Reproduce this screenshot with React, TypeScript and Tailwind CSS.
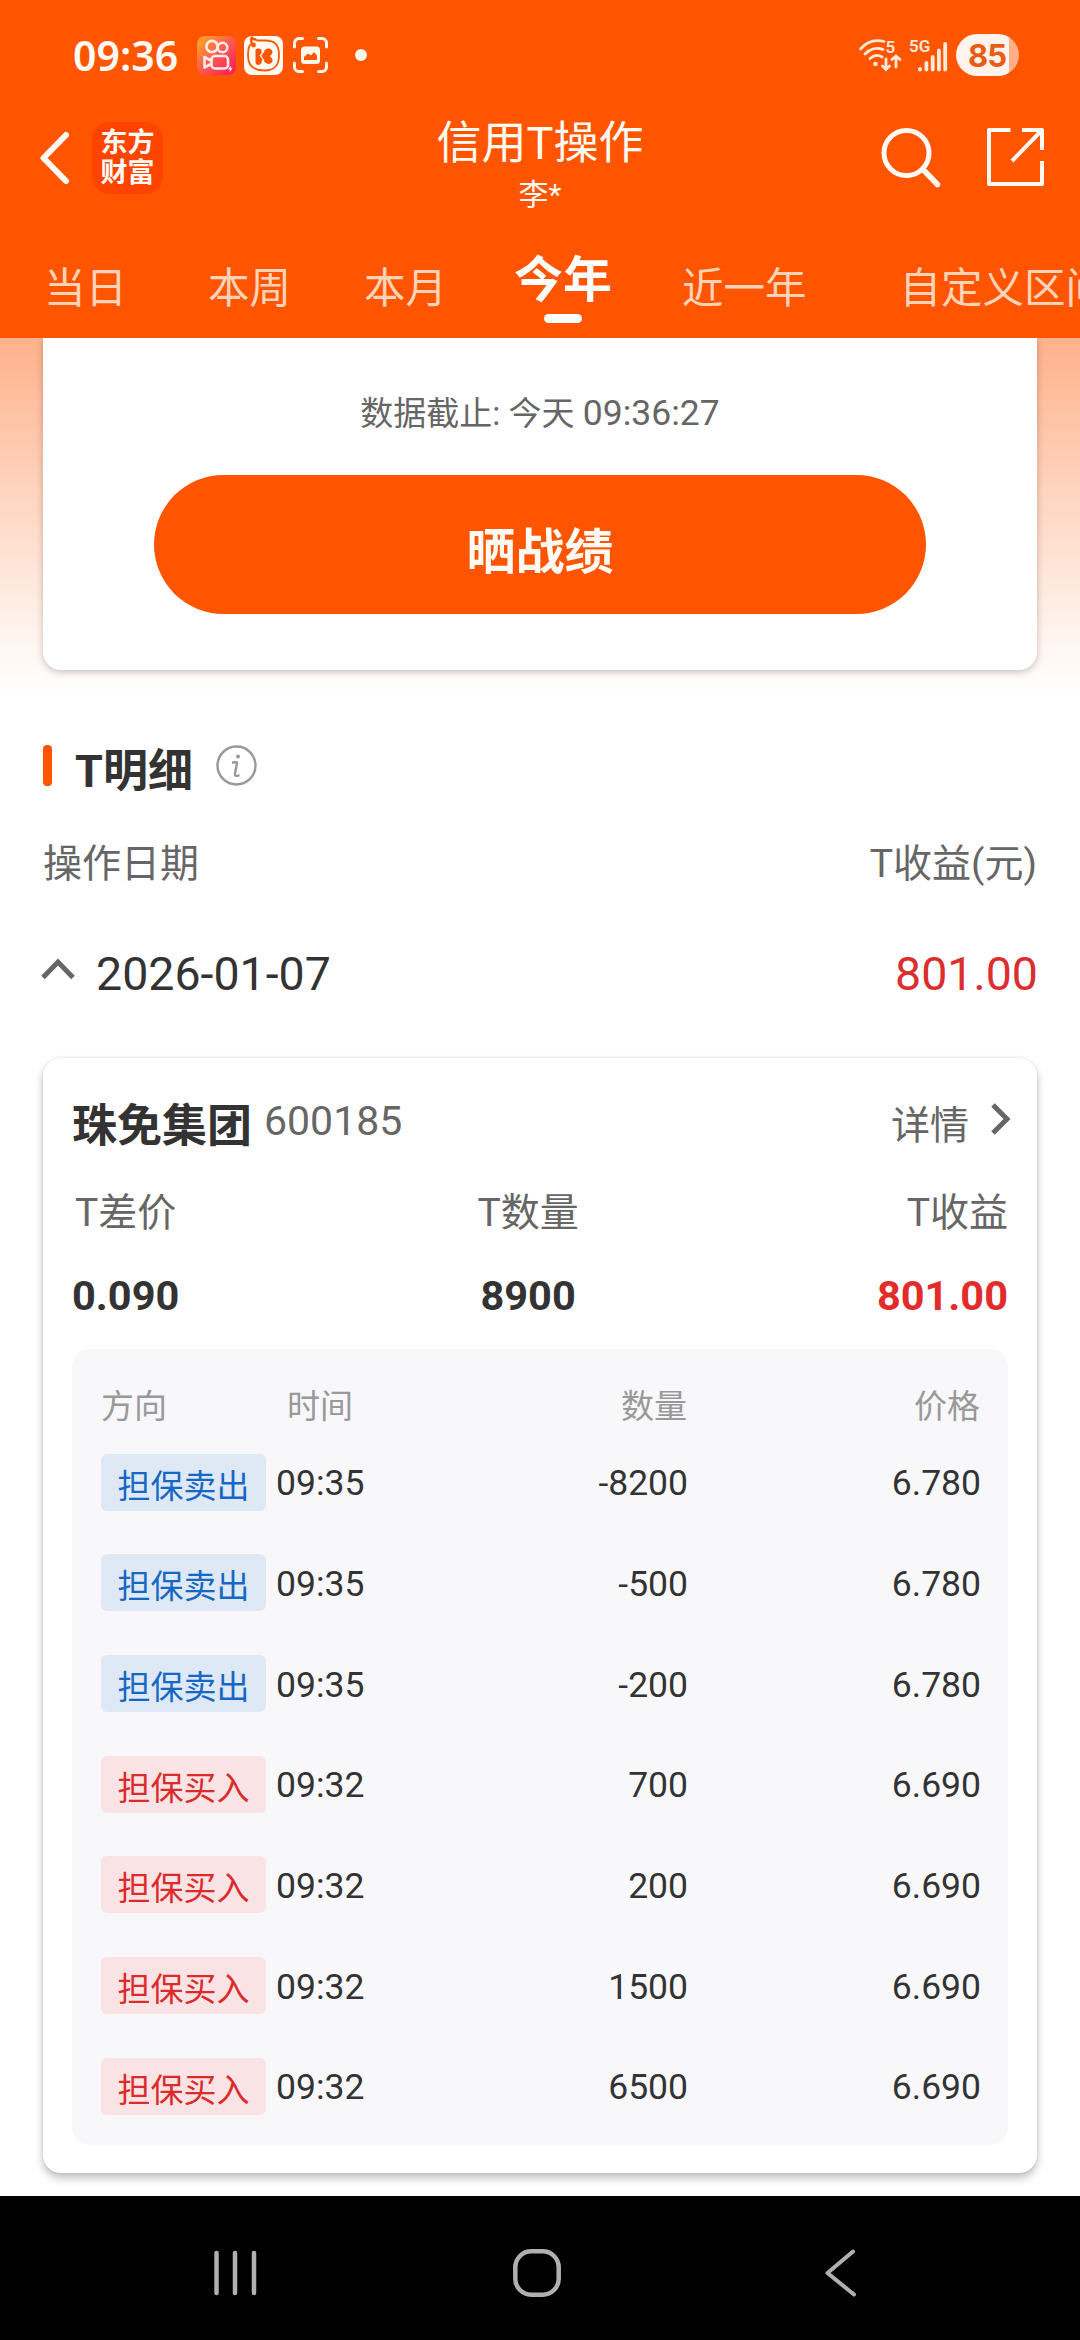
const tabs = [
  { label: '当日', gap: 'ml-[44px]' },
  { label: '本周', gap: 'ml-[81px]' },
  { label: '本月', gap: 'ml-[73px]' },
  { label: '今年', gap: 'ml-[67px]', active: true },
  { label: '近一年', gap: 'ml-[70px]' },
  { label: '自定义区间', gap: 'ml-[93px]' },
]

const trades = [
  { side: 'sell', time: '09:35', amount: '-8200', price: '6.780' },
  { side: 'sell', time: '09:35', amount: '-500', price: '6.780' },
  { side: 'sell', time: '09:35', amount: '-200', price: '6.780' },
  { side: 'buy', time: '09:32', amount: '700', price: '6.690' },
  { side: 'buy', time: '09:32', amount: '200', price: '6.690' },
  { side: 'buy', time: '09:32', amount: '1500', price: '6.690' },
  { side: 'buy', time: '09:32', amount: '6500', price: '6.690' },
]

function StatusBar() {
  return (
    <div className="flex h-[110px] items-center pl-[73px] pr-[61px]">
      <span className="w-[124px] font-['Noto_Sans',sans-serif] text-[41px] font-semibold leading-none">09:36</span>
      <svg className="h-[39px] w-[39px]" viewBox="0 0 39 39" fill="none">
        <defs>
          <linearGradient id="kwai" x1="0" y1="0" x2="1" y2="1">
            <stop offset="0" stopColor="#ffae1c" />
            <stop offset="0.5" stopColor="#ff5a50" />
            <stop offset="1" stopColor="#f5165c" />
          </linearGradient>
        </defs>
        <rect width="39" height="39" rx="8" fill="url(#kwai)" />
        <g stroke="#ffe9ec" strokeWidth="2.6" strokeLinejoin="round">
          <circle cx="15" cy="10.5" r="5.6" />
          <circle cx="25.5" cy="11.5" r="4.8" />
          <rect x="14.5" y="20" width="16.5" height="12.5" rx="3.6" />
          <path d="M14 24.5 7.5 21v10.5l6.5-3.5" />
        </g>
        <path d="M34 29.5l-3 4h2l-.5 3 3-4.5h-2z" fill="#fff" />
      </svg>
      <svg className="ml-[8px] h-[39px] w-[39px]" viewBox="0 0 39 39" fill="none">
        <rect width="39" height="39" rx="8" fill="#fffaf2" />
        <path d="M13 4.500h8c10 0 14 4 14 14.500s-4 15.500-14.500 15.500S4 30 4 19.500c0-5 .5-8 2-10.500" stroke="#ff5500" strokeWidth="1.8" strokeLinecap="round" />
        <path d="M8 1.500c-2 2 0 4-.5 6.500M8 2.500l3.500 1" stroke="#ff5500" strokeWidth="2.4" strokeLinecap="round" />
        <circle cx="9.5" cy="9" r="2.4" fill="#ff5500" />
        <path d="M11.500 14c1-2 5-2 6 0v3l4-3.500c3.500-2.500 8.500.5 6.500 4.500L26 20l2 2.500c2 4-2.500 7-6 4.500l-4-3c-.5 1.500 0 3.500-2 4.500s-4.500 0-4.500-2.500z" fill="#ff5500" />
        <path d="M20 15l-3.500 4.500L20 25" stroke="#fffaf2" strokeWidth="1.3" />
      </svg>
      <svg className="ml-[10px] h-[36px] w-[35px]" viewBox="0 0 35 36" fill="none">
        <path d="M1.500 10V6a4.500 4.500 0 0 1 4.500-4.500h3.500M25.500 1.500H29A4.500 4.500 0 0 1 33.500 6v4M33.500 26v4a4.500 4.500 0 0 1-4.500 4.500h-3.500M9.500 34.500H6A4.500 4.500 0 0 1 1.500 30v-4" stroke="#fff6ec" strokeWidth="3" strokeLinecap="round" />
        <rect x="8" y="9.5" width="19" height="17.5" rx="3.5" fill="#fff6ec" />
        <path d="M11 23v-3l4-3.500 3 2 3-3.500 3 3.500V23z" fill="#ff5500" />
      </svg>
      <span className="ml-[27px] h-[12px] w-[12px] rounded-full bg-[#fff6ec]" />

      <svg className="ml-auto h-[34px] w-[42px] overflow-visible" viewBox="0 0 42 34" fill="none">
        <g stroke="#ffe9d8" strokeWidth="2.8" strokeLinecap="round">
          <path d="M1.500 11C8 3.500 17 1.500 25 3.500" />
          <path d="M6 16c5-5 12-7 18-4.500" />
          <path d="M11 20.500c4-3.500 8-4 12-1.500" />
          <path d="M27 21v10M23.500 28l3.500 3.500 3.500-3.500M37 29V18.500M33 21.500l4-3.500 4 3.500" />
        </g>
        <circle cx="16.5" cy="26" r="2.3" fill="#ffe9d8" />
        <text x="26.5" y="15" fill="#ffe9d8" fontFamily="Roboto, sans-serif" fontSize="17" fontWeight="600">5</text>
      </svg>
      <svg className="ml-[8px] h-[34px] w-[39px] overflow-visible" viewBox="0 0 39 34" fill="#ffe9d8">
        <text x="0" y="14" fontFamily="Roboto, sans-serif" fontSize="17" fontWeight="600">5G</text>
        <rect x="9" y="29" width="4" height="4.5" rx="2" />
        <rect x="15.5" y="23" width="3.8" height="10.5" rx="1.9" />
        <rect x="21.8" y="17" width="3.8" height="16.5" rx="1.9" />
        <rect x="28" y="10.5" width="3.8" height="23" rx="1.9" />
        <rect x="34.3" y="4" width="3.8" height="29.5" rx="1.9" />
      </svg>
      <div className="ml-[8px] flex h-[42px] w-[63px] items-center justify-center rounded-full bg-[linear-gradient(90deg,#fff3ec_53px,#ffb088_53px)] pr-[1px] font-['Inter',sans-serif] text-[31px] font-bold leading-none tracking-[-1px] text-[#ea5b14]">
        85
      </div>
    </div>
  )
}

function Header() {
  return (
    <header className="h-[338px] overflow-hidden bg-[#ff5500] text-[#fffaf3]">
      <StatusBar />
      <div className="flex h-[108px] items-start justify-between">
        <div className="flex h-[96px] w-[340px] items-center pl-[40px]">
          <svg className="h-[54px] w-[30px]" viewBox="0 0 30 54" fill="none" stroke="#fffaf3" strokeWidth="6" strokeLinecap="round" strokeLinejoin="round">
            <path d="M26 4 3.500 27 26 50" />
          </svg>
          <div className="ml-[22px] flex h-[72px] w-[71px] flex-col items-center justify-center rounded-[17px] bg-[#ff4400] text-[27px] font-bold leading-[30px]">
            <span>东方</span>
            <span>财富</span>
          </div>
        </div>
        <div className="flex flex-col items-center whitespace-nowrap">
          <h1 className="text-[45px] leading-[67px]">信用T操作</h1>
          <p className="text-[30px] leading-[36px]">李*</p>
        </div>
        <div className="flex h-[96px] w-[340px] items-center justify-end pr-[36px]">
          <svg className="h-[62px] w-[60px]" viewBox="0 0 60 62" fill="none" stroke="#fffaf3" strokeLinecap="round">
            <circle cx="25.5" cy="26" r="22.5" strokeWidth="5" />
            <path d="M42 42.500 56.500 57.500" strokeWidth="5.5" />
          </svg>
          <svg className="mb-[2px] ml-[46px] h-[58px] w-[57px]" viewBox="0 0 57 58" fill="none" stroke="#fffaf3" strokeWidth="4" strokeLinejoin="round">
            <path d="M23.500 2H2v54h53V33" />
            <path d="M35 2h20v20M54 3 25 33" />
          </svg>
        </div>
      </div>
      <nav className="flex h-[120px] items-start whitespace-nowrap">
        {tabs.map((tab) =>
          tab.active ? (
            <div key={tab.label} className={`${tab.gap} flex shrink-0 flex-col items-center text-white`}>
              <span className="h-[96px] pt-[14px] text-[49px] font-bold leading-[98px]">{tab.label}</span>
              <span className="h-[9px] w-[38px] rounded-full bg-white" />
            </div>
          ) : (
            <span key={tab.label} className={`${tab.gap} shrink-0 text-[41.5px] leading-[141px] text-[#ffd3b8]`}>
              {tab.label}
            </span>
          ),
        )}
      </nav>
    </header>
  )
}

function SummaryCard() {
  return (
    <div className="mx-[43px] flex h-[332px] flex-col items-center rounded-b-[18px] bg-white shadow-[0_2px_7px_rgba(60,40,30,0.28)]">
      <p className="h-[137px] pt-[12px] text-[33px] leading-[127px] text-[#666]">
        数据截止: 今天 <span className="text-[35.5px]">09:36:27</span>
      </p>
      <button className="h-[139px] w-[772px] rounded-full bg-[#ff5500] pt-[17px] text-[49px] font-bold text-[#fffaf3]">
        晒战绩
      </button>
    </div>
  )
}

function SectionHead() {
  return (
    <div className="px-[43px]">
      <div className="mt-[75px] flex h-[41px] items-start">
        <span className="h-[41px] w-[9px] rounded-[4px] bg-[#ff5500]" />
        <h2 className="ml-[23px] text-[45px] font-bold leading-[53px] text-[#333]">T明细</h2>
        <svg className="ml-[23px] h-[41px] w-[41px]" viewBox="0 0 41 41" fill="none">
          <circle cx="20.5" cy="20.5" r="19" stroke="#999" strokeWidth="2.5" />
          <circle cx="22" cy="11.5" r="2" fill="#999" />
          <path d="M16 17.500c3 0 5-.8 5 0 0 2-2 9.500-2 12s3 .8 4.500.8" stroke="#999" strokeWidth="2.4" />
        </svg>
      </div>
      <div className="mt-[53px] flex h-[50px] items-center justify-between text-[39px] text-[#666]">
        <span>操作日期</span>
        <span>T收益(元)</span>
      </div>
      <div className="mt-[55px] flex h-[60px] items-center text-[46.5px] leading-[60px] text-[#333]">
        <svg className="-ml-[2px] mb-[10px] h-[22px] w-[34px]" viewBox="0 0 34 22" fill="none" stroke="#666" strokeWidth="5">
          <path d="M2 19.500 17 4l15 15.500" />
        </svg>
        <span className="ml-[21px]">2026-01-07</span>
        <span className="-mr-[1px] ml-auto text-[#dc2e2e]">801.00</span>
      </div>
    </div>
  )
}

function StockCard() {
  return (
    <div className="mx-[43px] mt-[54px] h-[1115px] rounded-[18px] bg-white px-[29px] pt-[45px] shadow-[0_5px_8px_rgba(0,0,0,0.25),0_0_3px_rgba(0,0,0,0.1)]">
      <div className="flex h-[46px] items-start">
        <span className="text-[45px] font-bold leading-[48px] text-[#333]">珠免集团</span>
        <span className="ml-[12px] text-[41px] leading-[37px] text-[#666]">600185</span>
        <span className="ml-auto text-[39px] leading-[46px] text-[#666]">详情</span>
        <svg className="-mr-[3px] ml-[21px] h-[32px] w-[21px]" viewBox="0 0 21 32" fill="none" stroke="#666" strokeWidth="5">
          <path d="M3 2l14 14L3 30" />
        </svg>
      </div>
      <div className="mt-[44px] flex justify-between text-[39px] text-[#666]">
        <div className="flex flex-col">
          <span className="pl-[3px] leading-[41px]">T差价</span>
          <b className="mt-[42px] text-[41.5px] leading-[40px] text-[#333]">0.090</b>
        </div>
        <div className="flex flex-col items-center">
          <span className="leading-[41px]">T数量</span>
          <b className="mt-[42px] text-[41.5px] leading-[40px] text-[#333]">8900</b>
        </div>
        <div className="flex flex-col items-end">
          <span className="leading-[41px]">T收益</span>
          <b className="mt-[42px] text-[41.5px] leading-[40px] text-[#e22b2b]">801.00</b>
        </div>
      </div>
      <div className="mt-[33px] h-[796px] rounded-[18px] bg-[#f8f8fb] pl-[29px] pt-[38px]">
        <div className="grid h-[40px] grid-cols-[186px_102px_299px_293px] text-[33px] leading-[40px] text-[#999]">
          <span>方向</span>
          <span>时间</span>
          <span className="pr-[1px] text-right">数量</span>
          <span className="pr-[1px] text-right">价格</span>
        </div>
        <div className="mt-[5px] text-[35.5px] text-[#333]">
          {trades.map((t, i) => (
            <div key={i} className="grid h-[100.67px] grid-cols-[175px_113px_299px_293px] items-center leading-[57px]">
              <span
                className={
                  t.side === 'sell'
                    ? 'h-[57px] w-[165px] rounded-[6px] bg-[#dfe9f6] text-center text-[33px] leading-[66px] text-[#1668c4]'
                    : 'h-[57px] w-[165px] rounded-[6px] bg-[#f9e3e4] text-center text-[33px] leading-[66px] text-[#dc2b2b]'
                }
              >
                {t.side === 'sell' ? '担保卖出' : '担保买入'}
              </span>
              <span className="pt-[3px]">{t.time}</span>
              <span className="pt-[3px] text-right">{t.amount}</span>
              <span className="pt-[3px] text-right">{t.price}</span>
            </div>
          ))}
        </div>
      </div>
    </div>
  )
}

function NavBar() {
  return (
    <footer className="flex h-[144px] items-center bg-black pt-[10px]">
      <svg className="ml-[213px] h-[48px] w-[44px]" viewBox="0 0 44 48" stroke="#b0b0b0" strokeWidth="4.5" strokeLinecap="round">
        <path d="M3.500 4v40M22 4v40M41 4v40" />
      </svg>
      <svg className="ml-[256px] h-[48px] w-[48px]" viewBox="0 0 48 48" fill="none" stroke="#b0b0b0" strokeWidth="4.5">
        <rect x="2.3" y="2.3" width="43.4" height="43.4" rx="16" />
      </svg>
      <svg className="ml-[264px] h-[48px] w-[31px]" viewBox="0 0 31 48" fill="none" stroke="#b0b0b0" strokeWidth="4" strokeLinecap="round" strokeLinejoin="round">
        <path d="M28 2.500 2.500 24 29 45.500" />
      </svg>
    </footer>
  )
}

export default function App() {
  return (
    <div className="flex h-[2340px] w-[1080px] flex-col overflow-hidden bg-white font-['Roboto','Noto_Sans_CJK_SC',sans-serif]">
      <Header />
      <main className="h-[1858px] overflow-hidden bg-[linear-gradient(180deg,#ffb18b_0px,#fff7f3_310px,#ffffff_362px)]">
        <SummaryCard />
        <SectionHead />
        <StockCard />
      </main>
      <NavBar />
    </div>
  )
}
